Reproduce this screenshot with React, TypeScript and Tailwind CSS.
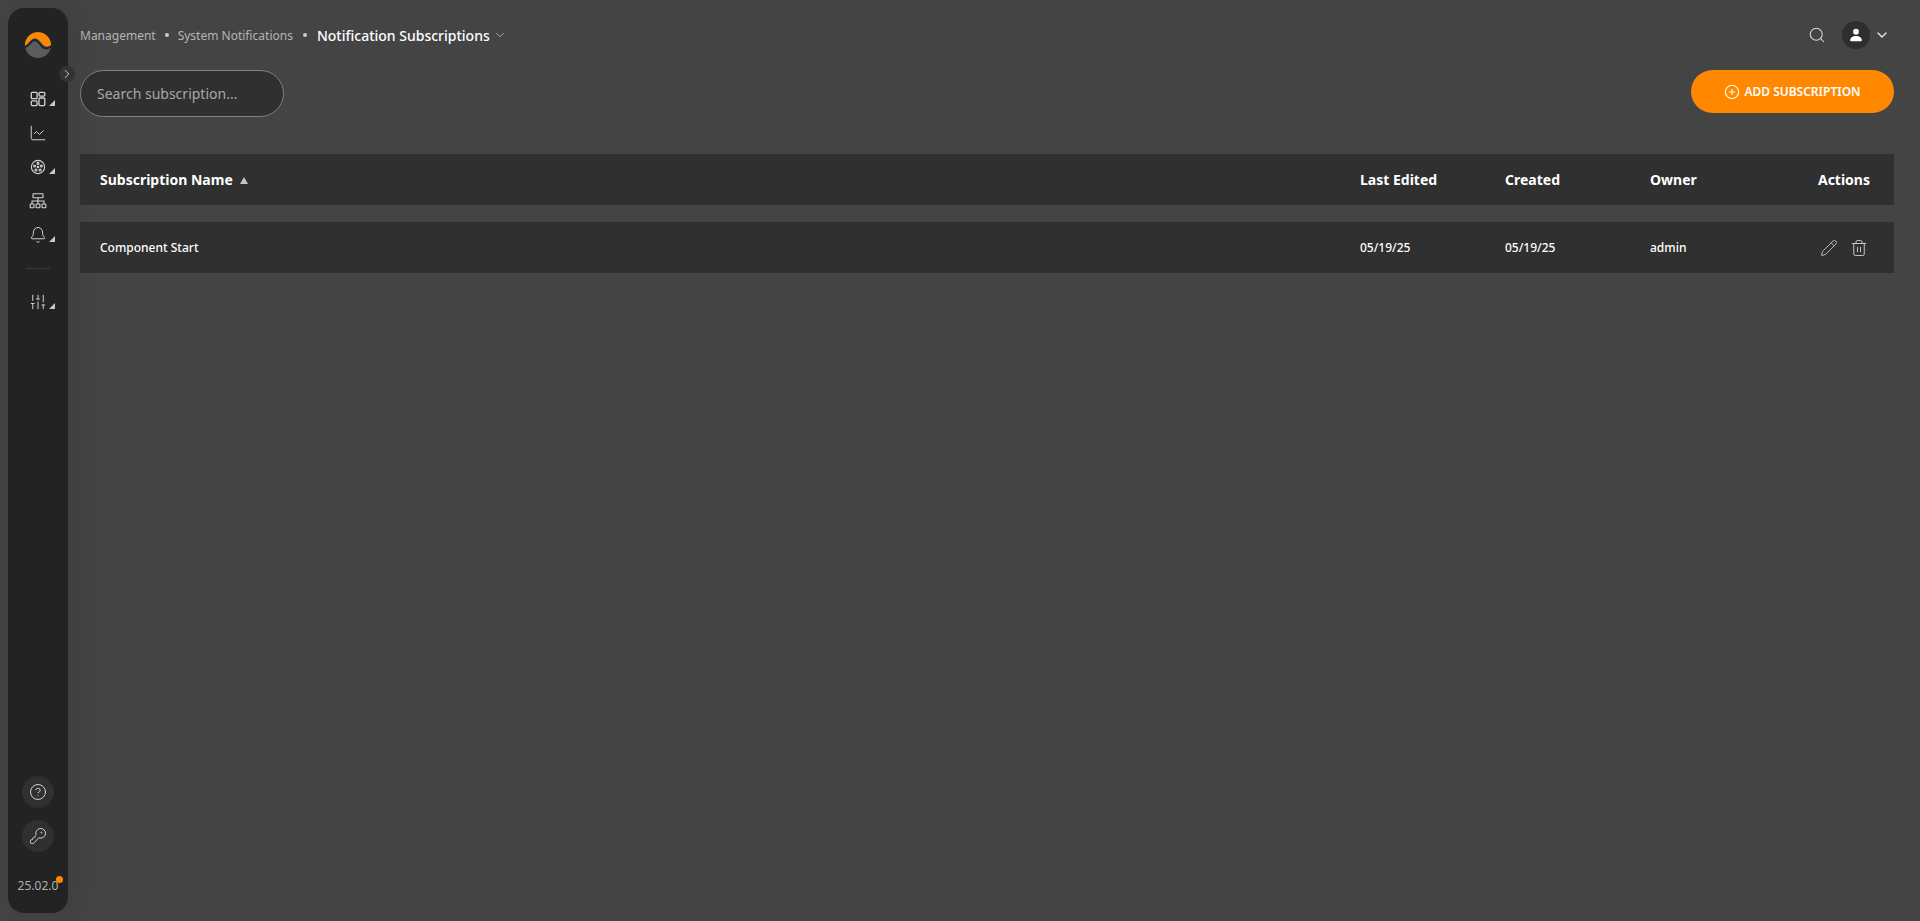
import { ChartLine, ChevronDown, ChevronRight, CircleHelp, CirclePlus, Bell, KeyRound, Pencil, Search, SlidersVertical, Trash2 } from "lucide-react";

const DashboardIcon = () => (
  <svg width="18" height="18" viewBox="0 0 18 18" fill="none" stroke="currentColor" strokeWidth="1.3">
    <rect x="2.3" y="2.3" width="5.8" height="6.4" rx="1" />
    <rect x="10" y="2.3" width="5.8" height="3.8" rx="1" />
    <rect x="2.3" y="10.8" width="5.8" height="4.8" rx="1" />
    <rect x="10" y="8" width="5.8" height="7.6" rx="1" />
  </svg>
);

const WheelIcon = () => (
  <svg width="18" height="18" viewBox="0 0 18 18" fill="none" stroke="currentColor" strokeWidth="1.1">
    <circle cx="9" cy="9" r="6.6" />
    <circle cx="9" cy="9" r="0.8" />
    <circle cx="9" cy="5.4" r="1" />
    <circle cx="5.6" cy="8" r="1" />
    <circle cx="12.4" cy="8" r="1" />
    <circle cx="6.9" cy="12" r="1" />
    <circle cx="11.1" cy="12" r="1" />
  </svg>
);

const TreeIcon = () => (
  <svg width="18" height="18" viewBox="0 0 18 18" fill="none" stroke="currentColor" strokeWidth="1.1">
    <rect x="4" y="1.8" width="10" height="4" rx="0.5" />
    <path d="M9 5.8V12M3 12V9h12v3" />
    <rect x="1.2" y="12" width="3.8" height="3.8" rx="0.6" />
    <rect x="7.1" y="12" width="3.8" height="3.8" rx="0.6" />
    <rect x="13" y="12" width="3.8" height="3.8" rx="0.6" />
  </svg>
);

const Logo = () => (
  <svg width="26" height="26" viewBox="0 0 26 26">
    <circle cx="13" cy="13" r="13" fill="#5c5c5c" />
    <path d="M0 13.5A13 13 0 0 1 26 13C23 14.5 20.5 15.5 17.5 12C15 9 12 5 8.5 6.5C5 8 3 12.5 0 13.5Z" fill="#ff8800" />
    <path d="M0 15C3.5 14.5 5.5 9.5 8.5 8.2C11.5 7 14 10.5 16.5 13.8C19.5 17.5 23 16.5 26 14.5" fill="none" stroke="#232323" strokeWidth="2" />
  </svg>
);

const UserSolid = () => (
  <svg width="14" height="14" viewBox="0 0 14 14" fill="currentColor">
    <circle cx="7" cy="3.7" r="2.9" />
    <path d="M1.2 12.6c0-3 2.4-4.6 5.8-4.6s5.8 1.6 5.8 4.6c0 .4-.3.6-.7.6H1.9c-.4 0-.7-.2-.7-.6z" />
  </svg>
);

const navItems = [
  { icon: <DashboardIcon />, menu: true },
  { icon: <ChartLine size={18} strokeWidth={1.3} />, menu: false },
  { icon: <WheelIcon />, menu: true },
  { icon: <TreeIcon />, menu: false },
  { icon: <Bell size={18} strokeWidth={1.3} />, menu: true },
];

const NavItem = ({ icon, menu }: { icon: React.ReactNode; menu: boolean }) => (
  <div className="relative flex h-[34px] w-full items-center justify-center text-[#d4d4d4]">
    {icon}
    {menu && (
      <span className="absolute left-[41px] top-[18px] h-0 w-0 border-b-[6px] border-l-[6px] border-b-[#c8c8c8] border-l-transparent" />
    )}
  </div>
);

const Sidebar = () => (
  <aside className="relative my-2 ml-2 flex w-[60px] shrink-0 flex-col items-center rounded-2xl bg-[#232323] pt-[24px] shadow-[8px_0_24px_rgba(0,0,0,0.08)]">
    <Logo />
    <div className="absolute -right-[7px] top-[58px] flex h-4 w-4 items-center justify-center rounded-full bg-[#333333] text-[#dddddd]">
      <ChevronRight size={14} strokeWidth={1.6} />
    </div>
    <nav className="mt-[24px] flex w-full flex-col items-center">
      {navItems.map((item, i) => (
        <NavItem key={i} icon={item.icon} menu={item.menu} />
      ))}
      <div className="my-4 h-px w-[24px] bg-[#3a3a3a]" />
      <NavItem icon={<SlidersVertical size={18} strokeWidth={1.3} />} menu />
    </nav>
    <div className="mt-auto flex flex-col items-center gap-3 pb-[18px]">
      <div className="flex h-8 w-8 items-center justify-center rounded-full bg-[#303030] text-[#d4d4d4]">
        <CircleHelp size={18} strokeWidth={1.3} />
      </div>
      <div className="flex h-8 w-8 items-center justify-center rounded-full bg-[#303030] text-[#d4d4d4]">
        <KeyRound size={18} strokeWidth={1.3} className="-scale-x-100 rotate-90" />
      </div>
      <div className="relative mt-[13px] text-[12px] leading-[18px] text-[#b0b0b0]">
        25.02.0
        <span className="absolute -right-[5px] -top-[1px] h-[7px] w-[7px] rounded-full bg-[#ff8800]" />
      </div>
    </div>
  </aside>
);

const TopBar = () => (
  <header className="flex h-[70px] items-center justify-between">
    <div className="flex items-center text-[12px] text-[#b4b4b4]">
      <span className="mt-[1px]">Management</span>
      <span className="mx-[9px] h-[4px] w-[4px] rounded-full bg-[#c8c8c8]" />
      <span className="mt-[1px]">System Notifications</span>
      <span className="mx-[10px] h-[4px] w-[4px] rounded-full bg-[#c8c8c8]" />
      <span className="text-[14px] font-medium text-white">Notification Subscriptions</span>
      <ChevronDown size={14} strokeWidth={1.3} className="ml-[3px] text-[#c8c8c8]" />
    </div>
    <div className="flex items-center pr-[4px]">
      <Search size={18} strokeWidth={1.4} className="text-[#d4d4d4]" />
      <div className="ml-4 flex h-7 w-7 items-center justify-center rounded-full bg-[#2e2e2e] text-white">
        <UserSolid />
      </div>
      <ChevronDown size={16} strokeWidth={2} className="ml-[4px] text-[#e8e8e8]" />
    </div>
  </header>
);

const Toolbar = () => (
  <div className="flex items-start justify-between">
    <div className="flex h-[47px] w-[204px] items-center rounded-full border border-[#808080] bg-[#303030] pl-4 text-[14px] text-[#a8a8a8]">
      Search subscription...
    </div>
    <button className="flex h-[43px] w-[203px] items-center justify-center gap-1 rounded-full bg-[#ff8800] text-[12px] font-semibold text-white">
      <CirclePlus size={16} strokeWidth={1.6} />
      ADD SUBSCRIPTION
    </button>
  </div>
);

const SubscriptionTable = () => (
  <div className="mt-[37px] flex flex-col gap-[17px] text-white">
    <div className="flex h-[51px] items-center bg-[#303030] pl-5 pr-6 text-[14px] font-bold">
      <div className="flex flex-1 items-center gap-[7px]">
        Subscription Name
        <span className="mt-[2px] h-0 w-0 border-x-[4.5px] border-b-[7px] border-x-transparent border-b-[#c4c4c4]" />
      </div>
      <div className="w-[145px]">Last Edited</div>
      <div className="w-[145px]">Created</div>
      <div className="w-[100px]">Owner</div>
      <div className="w-[120px] text-right">Actions</div>
    </div>
    <div className="flex h-[51px] items-center bg-[#303030] pl-5 pr-6 text-[12px] font-medium">
      <div className="flex-1">Component Start</div>
      <div className="w-[145px]">05/19/25</div>
      <div className="w-[145px]">05/19/25</div>
      <div className="w-[100px]">admin</div>
      <div className="flex w-[120px] items-center justify-end gap-3 pr-[2px] text-[#d4d4d4]">
        <Pencil size={18} strokeWidth={1.1} />
        <Trash2 size={18} strokeWidth={1.2} />
      </div>
    </div>
  </div>
);

export default function App() {
  return (
    <div className="flex h-[921px] w-full overflow-hidden bg-[#444444] font-['Noto_Sans',sans-serif]">
      <Sidebar />
      <main className="ml-3 mr-[26px] flex flex-1 flex-col">
        <TopBar />
        <Toolbar />
        <SubscriptionTable />
      </main>
    </div>
  );
}
